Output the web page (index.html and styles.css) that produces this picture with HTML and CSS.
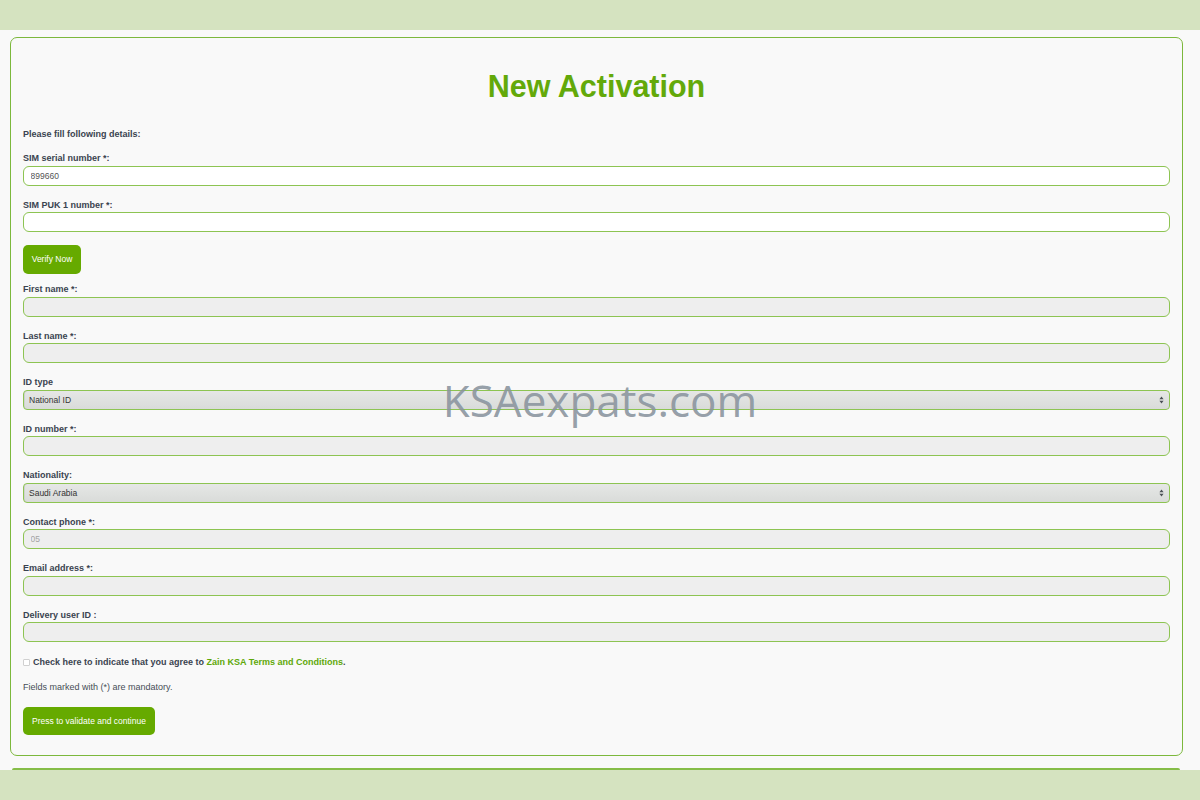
FILE: index.html
```html
<!DOCTYPE html>
<html lang="en">
<head>
<meta charset="utf-8">
<title>New Activation</title>
<link rel="stylesheet" href="styles.css">
</head>
<body>
<div class="band band-top"></div>
<main class="card">
  <h1 class="title">New Activation</h1>
  <p class="intro">Please fill following details:</p>
  <form class="form">
    <div class="field">
      <label class="label">SIM serial number *:</label>
      <input class="input input-white" type="text" value="899660">
    </div>
    <div class="field">
      <label class="label">SIM PUK 1 number *:</label>
      <input class="input input-white" type="text">
    </div>
    <button class="btn btn-verify" type="button">Verify Now</button>
    <div class="field">
      <label class="label">First name *:</label>
      <input class="input" type="text" disabled>
    </div>
    <div class="field">
      <label class="label">Last name *:</label>
      <input class="input" type="text" disabled>
    </div>
    <div class="field">
      <label class="label">ID type</label>
      <div class="select">
        <span class="select-text">National ID</span>
        <svg class="arrows" width="5" height="8" viewBox="0 0 5 8"><path d="M2.5 0.5L4.6 3.2H0.4Z M2.5 7.5L4.6 4.8H0.4Z" fill="#4a4f55"/></svg>
      </div>
    </div>
    <div class="field">
      <label class="label">ID number *:</label>
      <input class="input" type="text" disabled>
    </div>
    <div class="field">
      <label class="label">Nationality:</label>
      <div class="select">
        <span class="select-text">Saudi Arabia</span>
        <svg class="arrows" width="5" height="8" viewBox="0 0 5 8"><path d="M2.5 0.5L4.6 3.2H0.4Z M2.5 7.5L4.6 4.8H0.4Z" fill="#4a4f55"/></svg>
      </div>
    </div>
    <div class="field">
      <label class="label">Contact phone *:</label>
      <input class="input" type="text" placeholder="05" disabled>
    </div>
    <div class="field">
      <label class="label">Email address *:</label>
      <input class="input" type="text" disabled>
    </div>
    <div class="field">
      <label class="label">Delivery user ID :</label>
      <input class="input" type="text" disabled>
    </div>
    <p class="agree"><span class="check"></span>Check here to indicate that you agree to <a class="link" href="#">Zain KSA Terms and Conditions</a>.</p>
    <p class="note">Fields marked with (*) are mandatory.</p>
    <button class="btn btn-submit" type="button">Press to validate and continue</button>
  </form>
</main>
<div class="next-card"></div>
<div class="band band-bottom"></div>
<div class="watermark">KSAexpats.com</div>
</body>
</html>
```

FILE: styles.css
```css
html, body {
  margin: 0;
  padding: 0;
}
body {
  background: #f9f9f9;
  font-family: "Liberation Sans", Arial, sans-serif;
  color: #3a4350;
  width: 1200px;
  height: 800px;
  overflow: hidden;
  position: relative;
}
.band {
  background: #d5e3c0;
  width: 100%;
}
.band-top {
  height: 30px;
}
.band-bottom {
  height: 31px;
}
.card {
  margin: 7px 17px 0 10px;
  border: 1.5px solid #7cb83c;
  border-radius: 7px;
  padding: 0 12px 20px;
  background: #f9f9f9;
}
.title {
  margin: 31px 0 26px;
  font-size: 30.5px;
  line-height: 34px;
  font-weight: bold;
  text-align: center;
  color: #63a90a;
}
.intro {
  margin: 0 0 13px;
  font-size: 9px;
  line-height: 11px;
  font-weight: bold;
}
.form {
  display: flex;
  flex-direction: column;
  align-items: stretch;
}
.field {
  display: flex;
  flex-direction: column;
  margin-bottom: 14px;
}
.label {
  font-size: 9px;
  line-height: 11px;
  font-weight: bold;
  margin-bottom: 1.5px;
}
.input {
  box-sizing: border-box;
  height: 20px;
  border: 1px solid #8dc452;
  border-radius: 6px;
  background: #eeeeee;
  padding: 0 6.5px;
  font-family: "Liberation Sans", Arial, sans-serif;
  font-size: 8.5px;
  color: #555;
  outline: none;
  margin: 0;
}
.input-white {
  background: #ffffff;
}
.input::placeholder {
  color: #a4a4a4;
}
.select {
  box-sizing: border-box;
  height: 20px;
  border: 1px solid #8dc452;
  border-radius: 4px;
  background: linear-gradient(#e6e7e6 0%, #e0e2e0 45%, #d9dbd9 100%);
  box-shadow: inset 1px 0 0 #cfd1cf;
  display: flex;
  align-items: center;
  justify-content: space-between;
  padding: 0 5px 0 5px;
}
.select-text {
  font-size: 8.5px;
  color: #333;
}
.arrows {
  display: block;
}
.btn {
  align-self: flex-start;
  border: none;
  border-radius: 5px;
  background: #66aa00;
  color: #fff;
  font-family: "Liberation Sans", Arial, sans-serif;
  font-size: 8.5px;
  padding: 0 8px;
  cursor: pointer;
}
.btn-verify {
  height: 29px;
  width: 58px;
  margin-top: -1.5px;
  margin-bottom: 10.5px;
}
.btn-submit {
  height: 28px;
  width: 132px;
}
.agree {
  margin: 1px 0 14px;
  font-size: 9px;
  line-height: 11px;
  font-weight: bold;
  display: flex;
  align-items: center;
}
.check {
  display: inline-block;
  box-sizing: border-box;
  width: 7px;
  height: 7px;
  border: 1px solid #d0d0d0;
  border-radius: 1px;
  background: #fff;
  margin-right: 3px;
}
.link {
  color: #5fa80a;
  text-decoration: none;
  margin-left: 2.5px;
}
.note {
  margin: 0 0 13.5px;
  font-size: 9px;
  line-height: 11px;
  color: #464d56;
}
.next-card {
  margin: 12.5px 20px 0 12px;
  height: 1.5px;
  background: #86bd48;
  border-radius: 2px 2px 0 0;
}
.watermark {
  position: absolute;
  left: 0;
  right: 0;
  top: 378px;
  text-align: center;
  font-family: "Open Sans", sans-serif;
  font-size: 44px;
  line-height: 1;
  color: rgba(138, 148, 158, 0.9);
  pointer-events: none;
}
```
